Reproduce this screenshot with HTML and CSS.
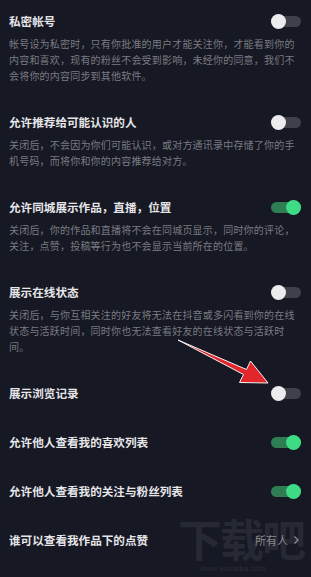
FILE: index.html
```html
<!DOCTYPE html>
<html lang="zh-CN">
<head>
<meta charset="utf-8">
<link rel="stylesheet" href="styles.css">
</head>
<body>
<div class="page">
  <div class="item">
    <div class="row"><span class="title">私密帐号</span><span class="toggle"></span></div>
    <p class="desc">帐号设为私密时，只有你批准的用户才能关注你，才能看到你的内容和喜欢，现有的粉丝不会受到影响，未经你的同意，我们不会将你的内容同步到其他软件。</p>
  </div>
  <div class="item">
    <div class="row"><span class="title">允许推荐给可能认识的人</span><span class="toggle"></span></div>
    <p class="desc">关闭后，不会因为你们可能认识，或对方通讯录中存储了你的手机号码，而将你和你的内容推荐给对方。</p>
  </div>
  <div class="item">
    <div class="row"><span class="title">允许同城展示作品，直播，位置</span><span class="toggle on"></span></div>
    <p class="desc">关闭后，你的作品和直播将不会在同城页显示，同时你的评论，关注，点赞，投稿等行为也不会显示当前所在的位置。</p>
  </div>
  <div class="item">
    <div class="row"><span class="title">展示在线状态</span><span class="toggle"></span></div>
    <p class="desc">关闭后，与你互相关注的好友将无法在抖音或多闪看到你的在线状态与活跃时间，同时你也无法查看好友的在线状态与活跃时间。</p>
  </div>
  <div class="item simple">
    <div class="row"><span class="title">展示浏览记录</span><span class="toggle"></span></div>
  </div>
  <div class="item simple">
    <div class="row"><span class="title">允许他人查看我的喜欢列表</span><span class="toggle on"></span></div>
  </div>
  <div class="item simple">
    <div class="row"><span class="title">允许他人查看我的关注与粉丝列表</span><span class="toggle on"></span></div>
  </div>
  <div class="item simple">
    <div class="row"><span class="title">谁可以查看我作品下的点赞</span><span class="value">所有人<svg class="chev" width="7" height="10" viewBox="0 0 7 10"><path d="M1.5 1.5 L5 5 L1.5 8.5" fill="none" stroke="#8a8b90" stroke-width="1.3"/></svg></span></div>
  </div>

  <div class="watermark">
    <div class="wm-big">下载吧</div>
    <div class="wm-small">www.xiazaiba.com</div>
  </div>

  <svg class="arrow" width="311" height="577" viewBox="0 0 311 577">
    <polygon points="178,340 246.5,369.5 250.5,361 268,383 239.5,382.5 243.5,374.5" fill="#e3262b" stroke="#f4f4f4" stroke-width="1" stroke-linejoin="round"/>
  </svg>
</div>
</body>
</html>
```

FILE: styles.css
```css
html, body {
  margin: 0;
  padding: 0;
  background: #161823;
}
.page {
  position: relative;
  width: 311px;
  height: 577px;
  overflow: hidden;
  box-sizing: border-box;
  padding: 11px 9px 0 9px;
  display: flex;
  flex-direction: column;
  gap: 28px;
  font-family: "Noto Sans CJK SC", "Noto Sans", sans-serif;
}
.item {
  display: flex;
  flex-direction: column;
}
.item.simple + .item.simple {
  margin-top: 1px;
}
.row {
  height: 20px;
  display: flex;
  align-items: center;
  justify-content: space-between;
}
.title {
  font-size: 11.6px;
  font-weight: 700;
  color: #e6e6e9;
  line-height: 20px;
}
.desc {
  margin: 5px 0 0 0;
  width: 290px;
  font-size: 10px;
  letter-spacing: 0.2px;
  line-height: 16px;
  color: #7a7b82;
}
.toggle {
  position: relative;
  width: 30px;
  height: 11px;
  border-radius: 6px;
  background: #3f4049;
  margin-right: 1px;
}
.toggle::after {
  content: "";
  position: absolute;
  left: 0;
  top: -2px;
  width: 15px;
  height: 15px;
  border-radius: 50%;
  background: #ececee;
}
.toggle.on {
  background: #2f7d52;
}
.toggle.on::after {
  left: auto;
  right: 0;
  background: #3fdc86;
}
.value {
  display: flex;
  align-items: center;
  gap: 5px;
  font-size: 11px;
  color: #8a8b90;
  margin-right: 2px;
}
.watermark {
  position: absolute;
  left: 178px;
  top: 512px;
  width: 133px;
  pointer-events: none;
}
.wm-big {
  font-family: "Noto Sans CJK SC", sans-serif;
  font-weight: 700;
  font-size: 44px;
  line-height: 52px;
  letter-spacing: -2px;
  color: rgba(150, 155, 175, 0.14);
}
.wm-small {
  font-family: "Liberation Sans", sans-serif;
  font-size: 8px;
  line-height: 10px;
  margin-left: 22px;
  color: rgba(150, 155, 175, 0.18);
}
.arrow {
  position: absolute;
  left: 0;
  top: 0;
  pointer-events: none;
}
```
